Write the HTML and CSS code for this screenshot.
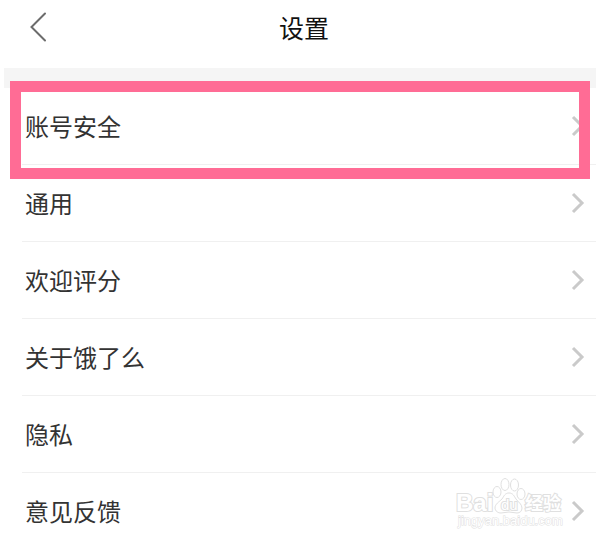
FILE: index.html
```
<!DOCTYPE html>
<html lang="zh-CN">
<head>
<meta charset="utf-8">
<meta name="viewport" content="width=device-width, initial-scale=1">
<title>设置</title>
<link rel="stylesheet" href="styles.css">
</head>
<body>
<header class="topbar">
  <button class="back" type="button" aria-label="返回">
    <svg width="18" height="30" viewBox="0 0 18 30"><path d="M16 1.5 2.5 15 16 28.5"/></svg>
  </button>
  <h1 class="title">设置</h1>
</header>
<main class="content">
  <ul class="list">
    <li class="item highlighted"><a class="row" href="#security"><span>账号安全</span><svg class="chevron" width="14" height="22" viewBox="0 0 14 22"><path d="M2 2 11 11 2 20"/></svg></a></li>
    <li class="item"><a class="row" href="#general"><span>通用</span><svg class="chevron" width="14" height="22" viewBox="0 0 14 22"><path d="M2 2 11 11 2 20"/></svg></a></li>
    <li class="item"><a class="row" href="#rate"><span>欢迎评分</span><svg class="chevron" width="14" height="22" viewBox="0 0 14 22"><path d="M2 2 11 11 2 20"/></svg></a></li>
    <li class="item"><a class="row" href="#about"><span>关于饿了么</span><svg class="chevron" width="14" height="22" viewBox="0 0 14 22"><path d="M2 2 11 11 2 20"/></svg></a></li>
    <li class="item"><a class="row" href="#privacy"><span>隐私</span><svg class="chevron" width="14" height="22" viewBox="0 0 14 22"><path d="M2 2 11 11 2 20"/></svg></a></li>
    <li class="item"><a class="row" href="#feedback"><span>意见反馈</span><svg class="chevron" width="14" height="22" viewBox="0 0 14 22"><path d="M2 2 11 11 2 20"/></svg></a></li>
  </ul>
</main>
<svg class="watermark" width="112" height="66" viewBox="0 0 112 66">
  <g class="outline">
    <text class="brand" x="2" y="36">Bai</text>
    <ellipse cx="43" cy="17" rx="4" ry="5.5"/>
    <ellipse cx="51" cy="9.5" rx="4" ry="6"/>
    <ellipse cx="60.5" cy="10" rx="4" ry="6"/>
    <ellipse cx="67" cy="19" rx="4" ry="5.5"/>
    <path d="M55 18c-4 0-5 3-7 6-3 3-7 5-7 9 0 3 3 5 6 5 3 0 5-1 8-1s5 1 8 1c3 0 5-2 5-5 0-4-4-6-6-9-2-3-3-6-7-6Z"/>
    <text class="du" x="47" y="35">du</text>
    <text class="cjk" x="71" y="35">经验</text>
    <text class="url" x="4" y="50">jingyan.baidu.com</text>
  </g>
</svg>
</body>
</html>
```
FILE: styles.css
```
* {
  box-sizing: border-box;
}

body {
  margin: 0;
  padding-left: 4px;
  position: relative;
  background: #fff;
  color: #333;
  font-family: "Noto Sans CJK SC", sans-serif;
}

.topbar {
  display: grid;
  grid-template-columns: 72px 1fr 64px;
  align-items: center;
  height: 68px;
  padding-bottom: 15px;
}

.back {
  display: flex;
  margin: 0;
  padding: 0 0 0 25px;
  border: 0;
  background: none;
}

.back path {
  fill: none;
  stroke: #6c6c6c;
  stroke-width: 2;
  stroke-linecap: round;
}

.title {
  margin: 0;
  color: #111;
  font-size: 25px;
  font-weight: 400;
  line-height: 32px;
  text-align: center;
}

.content {
  border-top: 20px solid #f5f5f5;
}

.list {
  margin: 0;
  padding: 0;
  list-style: none;
}

.item {
  position: relative;
  padding-left: 18px;
}

.row {
  display: flex;
  align-items: center;
  justify-content: space-between;
  padding: 22px 11px 22px 3px;
  border-bottom: 1px solid #f0f0f0;
  color: inherit;
  font-size: 24px;
  line-height: 32px;
  text-decoration: none;
}

.item:last-child .row {
  padding-bottom: 14px;
  border-bottom: 0;
}

.chevron path {
  fill: none;
  stroke: #cacaca;
  stroke-width: 3;
}

.highlighted::after {
  content: "";
  position: absolute;
  inset: -7px 6px -14px 6px;
  border: 11px solid #ff6c95;
  pointer-events: none;
}

.watermark {
  position: absolute;
  right: 30px;
  bottom: 0;
  pointer-events: none;
}

.outline {
  fill: #fff;
  stroke: #e0e0e0;
  stroke-width: 1;
  font-family: "Liberation Sans", sans-serif;
}

.outline text {
  stroke-width: 2;
  paint-order: stroke;
}

.outline .brand {
  font-size: 24px;
  font-weight: 700;
}

.outline .du {
  font-size: 15px;
}

.outline .cjk {
  font-family: "Noto Sans CJK SC", sans-serif;
  font-size: 18px;
  font-weight: 700;
}

.outline .url {
  font-size: 13px;
  stroke-width: 1;
}
```
